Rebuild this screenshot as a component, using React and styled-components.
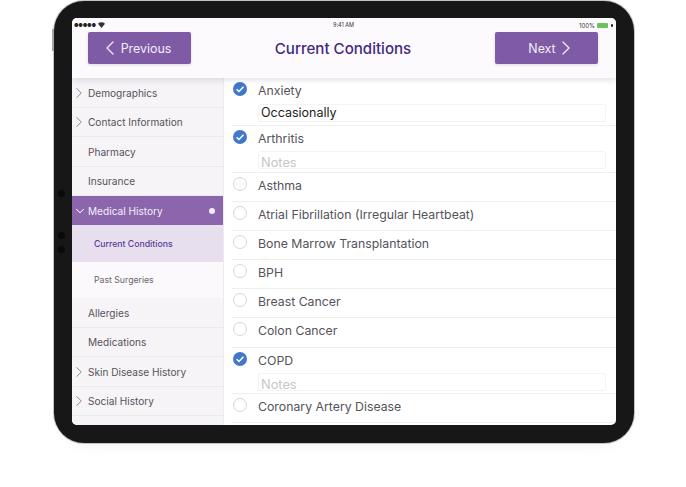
import React from 'react';
import styled, { createGlobalStyle } from 'styled-components';
import { ChevronLeft, ChevronRight, ChevronDown } from 'lucide-react';

const Global = createGlobalStyle`
  html, body { margin: 0; padding: 0; background: #fff; }
  body { font-family: Inter, "Liberation Sans", sans-serif; overflow: hidden; }
  * { box-sizing: border-box; }
`;

const Page = styled.div`
  width: 686px;
  height: 487px;
  padding: 1px 0 0 54px;
`;

const Device = styled.div`
  position: relative;
  width: 580px;
  height: 442px;
  padding: 17px 18px 18px;
  background: #171717;
  border-radius: 30px;
  box-shadow: 0 0 0 1px #c4c4c4, 0 10px 14px -8px rgba(0, 0, 0, 0.05);
`;

const SideKey = styled.div`
  position: absolute;
  left: -2px;
  top: ${p => p.$top}px;
  width: 2px;
  height: ${p => p.$h}px;
  background: #a5a5a5;
`;

const Lens = styled.div`
  position: absolute;
  left: 4px;
  top: ${p => p.$top}px;
  width: 7px;
  height: 7px;
  border-radius: 50%;
  background: #0a0a0a;
`;

const Screen = styled.div`
  height: 407px;
  width: 544px;
  background: #fff;
  border-radius: 5px;
  overflow: hidden;
  display: flex;
  flex-direction: column;
`;

const Header = styled.header`
  position: relative;
  z-index: 2;
  height: 60px;
  flex: none;
  background: #fcfafc;
  box-shadow: 0 2px 6px rgba(40, 30, 70, 0.14);
`;

const StatusBar = styled.div`
  height: 14px;
  padding: 0 3px 0 2px;
  display: flex;
  align-items: center;
  justify-content: space-between;
  font-size: 5.5px;
  color: #333;
`;

const StatusSide = styled.div`
  display: flex;
  align-items: center;
  gap: 2px;
  width: 60px;
  font-size: 6px;
  justify-content: ${p => (p.$end ? 'flex-end' : 'flex-start')};
`;

const Dots = styled.span`
  font-size: 5px;
  letter-spacing: -0.2px;
  color: #222;
`;

const Battery = styled.span`
  width: 11px;
  height: 5px;
  background: #6cc35c;
  border-radius: 1px;
`;

const Plug = styled.span`
  width: 2px;
  height: 3px;
  margin-left: 1px;
  background: #222;
  border-radius: 1px;
`;

const Nav = styled.div`
  padding: 0 18px 0 16px;
  display: flex;
  align-items: center;
  justify-content: space-between;
`;

const NavButton = styled.button`
  width: 103px;
  height: 32px;
  padding: ${p => (p.$next ? '0 0 0 13px' : '0 10px 0 0')};
  border: 0;
  border-radius: 2px;
  background: #7f5ba6;
  color: #f3eef8;
  font: 400 12.4px Inter, "Liberation Sans", sans-serif;
  display: flex;
  align-items: center;
  justify-content: center;
  box-shadow: 0 1px 3px rgba(90, 60, 130, 0.18);
`;

const PrevIcon = styled(ChevronLeft)`
  margin-right: -1px;
`;

const NextIcon = styled(ChevronRight)`
  margin-left: -2px;
`;

const Title = styled.h1`
  margin: 0;
  font-size: 15.1px;
  font-weight: 500;
  color: #43297f;
`;

const Body = styled.div`
  flex: 1;
  min-height: 0;
  display: flex;
`;

const Sidebar = styled.nav`
  width: 152px;
  flex: none;
  background: #f6f4f7;
  border-right: 1px solid #ececee;
`;

const SideRow = styled.div`
  height: 29.5px;
  padding: 1px 0 0 ${p => (p.$icon ? 0 : 16)}px;
  display: flex;
  align-items: center;
  font-size: 10.1px;
  color: #56535a;
  border-bottom: 1px solid #ebe9ec;
`;

const RowArrow = styled(ChevronRight)`
  margin-left: -2px;
  flex: none;
`;

const ActiveRow = styled.div`
  height: 29px;
  padding: 0 8px 0 0;
  display: flex;
  align-items: center;
  font-size: 10.1px;
  color: #f4eff8;
  background: #8b66ad;
`;

const OpenArrow = styled(ChevronDown)`
  margin: 0 1px;
  flex: none;
`;

const ActiveDot = styled.span`
  width: 6px;
  height: 6px;
  margin-left: auto;
  border-radius: 50%;
  background: #f2edf6;
`;

const SubRow = styled.div`
  height: ${p => p.$h}px;
  padding-left: 22px;
  display: flex;
  align-items: center;
  font-size: 8.7px;
  color: ${p => (p.$active ? '#5c3a9a' : '#6a676e')};
  font-weight: ${p => (p.$active ? 500 : 400)};
  background: ${p => (p.$active ? '#e7dfee' : '#fbf9fb')};
`;

const List = styled.main`
  flex: 1;
  min-width: 0;
  padding-left: 8px;
`;

const Item = styled.div`
  padding-top: 4px;
  height: ${p => (p.$notes ? 46.5 : 29.2)}px;
  border-bottom: 1px solid #f0eff0;
  overflow: hidden;
  &:first-child { height: 48px; }
`;

const ItemHead = styled.div`
  display: flex;
  align-items: flex-start;
  gap: 11px;
  height: 21px;
  padding-left: 1px;
`;

const Radio = styled.span`
  width: 14px;
  height: 14px;
  flex: none;
  border-radius: 50%;
  border: 1px solid #d6d6d6;
  background: #fff;
`;

const CheckIcon = styled.svg`
  width: 14px;
  height: 14px;
  flex: none;
`;

const Label = styled.span`
  font-size: 12.3px;
  line-height: 18px;
  color: #55535a;
`;

const NoteBox = styled.div`
  margin: ${p => (p.$filled ? '1px' : '0')} 10px 0 26px;
  height: 18px;
  padding: ${p => (p.$filled ? 0 : 3)}px 2px 0;
  border: 1px solid #f3f3f3;
  border-radius: 2px;
  font-size: ${p => (p.$filled ? 12.5 : 12.8)}px;
  line-height: 16px;
  color: ${p => (p.$filled ? '#1c1c1c' : '#c6c6c8')};
  overflow: hidden;
`;

const Check = () => (
  <CheckIcon viewBox="0 0 14 14">
    <circle cx="7" cy="7" r="7" fill="#4278c8" />
    <path d="M3.6 7.2l2.4 2.3 4.5-4.8" fill="none" stroke="#fff" strokeWidth="1.5" />
  </CheckIcon>
);

const Wifi = () => (
  <svg width="7" height="6" viewBox="0 0 7 6">
    <path d="M0 1.8a5 5 0 0 1 7 0L3.5 6z" fill="#333" />
  </svg>
);

const menuTop = [
  { name: 'Demographics', arrow: true },
  { name: 'Contact Information', arrow: true },
  { name: 'Pharmacy' },
  { name: 'Insurance' },
];
const menuBottom = [
  { name: 'Allergies' },
  { name: 'Medications' },
  { name: 'Skin Disease History', arrow: true },
  { name: 'Social History', arrow: true },
];

const conditions = [
  { name: 'Anxiety', checked: true, note: 'Occasionally' },
  { name: 'Arthritis', checked: true, note: '' },
  { name: 'Asthma' },
  { name: 'Atrial Fibrillation (Irregular Heartbeat)' },
  { name: 'Bone Marrow Transplantation' },
  { name: 'BPH' },
  { name: 'Breast Cancer' },
  { name: 'Colon Cancer' },
  { name: 'COPD', checked: true, note: '' },
  { name: 'Coronary Artery Disease' },
];

const MenuRow = ({ item }) => (
  <SideRow $icon={item.arrow}>
    {item.arrow && <RowArrow size={18} color="#77747a" strokeWidth={1.1} />}
    {item.name}
  </SideRow>
);

export default function App() {
  return (
    <Page>
      <Global />
      <Device>
        <SideKey $top={28} $h={22} />
        <Lens $top={189} />
        <Lens $top={231} />
        <Lens $top={245} />
        <Screen>
          <Header>
            <StatusBar>
              <StatusSide><Dots>●●●●●</Dots><Wifi /></StatusSide>
              <span>9:41 AM</span>
              <StatusSide $end>100%<Battery /><Plug /></StatusSide>
            </StatusBar>
            <Nav>
              <NavButton>
                <PrevIcon size={24} strokeWidth={1.3} />
                Previous
              </NavButton>
              <Title>Current Conditions</Title>
              <NavButton $next>
                Next
                <NextIcon size={24} strokeWidth={1.3} />
              </NavButton>
            </Nav>
          </Header>
          <Body>
            <Sidebar>
              {menuTop.map(item => <MenuRow key={item.name} item={item} />)}
              <ActiveRow>
                <OpenArrow size={14} strokeWidth={1.8} />
                Medical History
                <ActiveDot />
              </ActiveRow>
              <SubRow $active $h={37}>Current Conditions</SubRow>
              <SubRow $h={36}>Past Surgeries</SubRow>
              {menuBottom.map(item => <MenuRow key={item.name} item={item} />)}
            </Sidebar>
            <List>
              {conditions.map(c => (
                <Item key={c.name} $notes={c.note !== undefined}>
                  <ItemHead>
                    {c.checked ? <Check /> : <Radio />}
                    <Label>{c.name}</Label>
                  </ItemHead>
                  {c.note !== undefined && (
                    <NoteBox $filled={!!c.note}>{c.note || 'Notes'}</NoteBox>
                  )}
                </Item>
              ))}
            </List>
          </Body>
        </Screen>
      </Device>
    </Page>
  );
}
